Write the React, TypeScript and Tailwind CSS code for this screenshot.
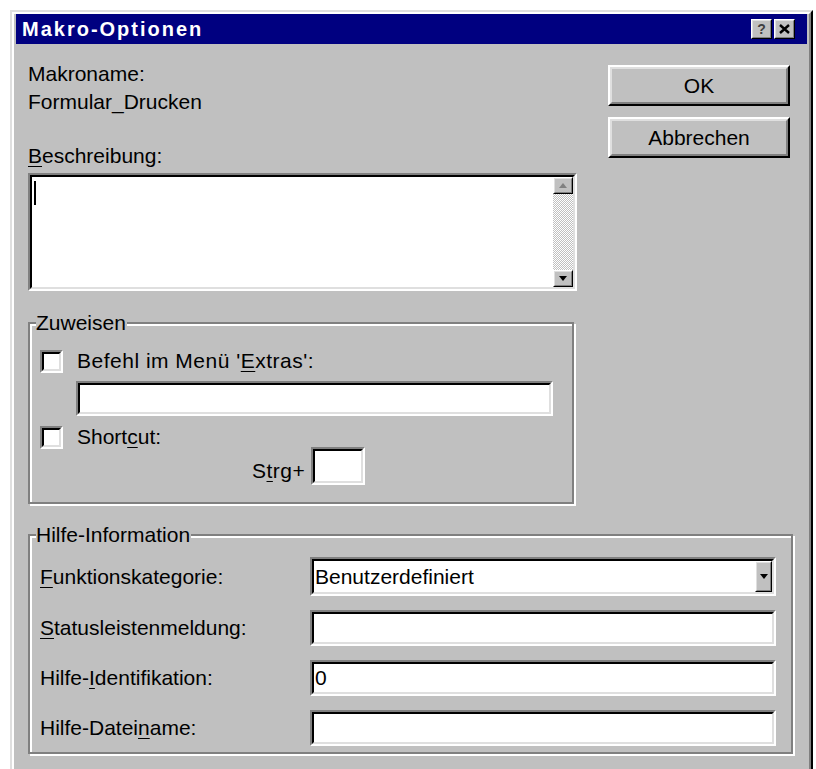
import type { ReactNode } from "react";

// Classic 3D bevels: sunken fields and raised buttons
function Sunken({ className = "", children }: { className?: string; children?: ReactNode }) {
  return (
    <div className={`border-2 border-t-[#808080] border-l-[#808080] border-b-white border-r-white ${className}`}>
      <div className="flex h-full w-full border-2 border-t-black border-l-black border-b-[#dfdfdf] border-r-[#dfdfdf] bg-white">
        {children}
      </div>
    </div>
  );
}

function Raised({ className = "", thin = false, children }: { className?: string; thin?: boolean; children?: ReactNode }) {
  const w = thin ? "border" : "border-2";
  return (
    <div className={`${w} border-t-white border-l-white border-b-black border-r-black ${className}`}>
      <div className={`flex h-full w-full items-center justify-center ${w} border-t-[#dfdfdf] border-l-[#dfdfdf] border-b-[#808080] border-r-[#808080] bg-[#c0c0c0]`}>
        {children}
      </div>
    </div>
  );
}

function Group({ title, className = "", children }: { title: string; className?: string; children: ReactNode }) {
  return (
    <div className={`relative border-2 border-[#808080] shadow-[inset_2px_2px_0_#fff,2px_2px_0_#fff] ${className}`}>
      <span className="absolute -top-[15px] left-[6px] bg-[#c0c0c0] pr-[1px] leading-[28px]">{title}</span>
      {children}
    </div>
  );
}

function Key({ children }: { children: ReactNode }) {
  return <span className="underline decoration-1 underline-offset-[3px]">{children}</span>;
}

function Arrow({ down = false }: { down?: boolean }) {
  return (
    <svg width="8" height="5" viewBox="0 0 8 5">
      <path d={down ? "M0 0h8L4 5z" : "M0 5h8L4 0z"} fill={down ? "#000" : "#808080"} />
    </svg>
  );
}

function Checkbox() {
  return <Sunken className="h-[23px] w-[23px] shrink-0" />;
}

export default function App() {
  return (
    <div className="h-[769px] overflow-hidden bg-white pl-[10px] pt-[10px] font-['Liberation_Sans',Arial,sans-serif] text-[21px] text-black">
      <div className="h-[780px] w-[803px] border-2 border-t-[#dfdfdf] border-l-[#dfdfdf] border-b-black border-r-black">
        <div className="h-full border-2 border-t-white border-l-white border-b-[#808080] border-r-[#808080] bg-[#c0c0c0] px-[2px]">
          {/* caption */}
          <div className="flex h-[30px] items-center bg-[#000080] pl-[6px] pr-[12px]">
            <span className="text-[20px] font-bold tracking-[2px] text-white">Makro-Optionen</span>
            <div className="ml-auto flex gap-[2px]">
              <Raised thin className="h-[20px] w-[21px]">
                <span className="text-[14px] font-bold leading-none text-[#404040]">?</span>
              </Raised>
              <Raised thin className="h-[20px] w-[21px]">
                <svg width="11" height="10" viewBox="0 0 11 10">
                  <path d="M1 1l9 8M10 1l-9 8" stroke="#000" strokeWidth="2.4" />
                </svg>
              </Raised>
            </div>
          </div>

          <div className="px-[12px] pt-[16px]">
            <div className="flex items-start">
              <div className="w-[549px]">
                <div className="leading-[28px]">Makroname:</div>
                <div className="leading-[28px]">Formular_Drucken</div>
                <div className="mt-[26px] leading-[28px]">
                  <Key>B</Key>eschreibung:
                </div>
                <Sunken className="mt-[3px] h-[118px] w-[549px]">
                  <div className="flex-1 pl-[2px] pt-[4px]">
                    <div className="h-[24px] w-[2px] bg-black" />
                  </div>
                  <div className="flex w-[20px] flex-col bg-[repeating-conic-gradient(#c0c0c0_0%_25%,#ffffff_0%_50%)] bg-[length:2px_2px]">
                    <Raised thin className="h-[17px] w-[20px]">
                      <Arrow />
                    </Raised>
                    <div className="flex-1" />
                    <Raised thin className="h-[17px] w-[20px]">
                      <Arrow down />
                    </Raised>
                  </div>
                </Sunken>

                <Group title="Zuweisen" className="mt-[31px] w-[546px] pb-[17px] pl-[10px] pt-[24px]">
                  <div className="flex h-[26px] items-center gap-[14px]">
                    <Checkbox />
                    <span className="leading-[28px] tracking-[0.5px]">
                      Befehl im Menü '<Key>E</Key>xtras':
                    </span>
                  </div>
                  <Sunken className="ml-[36px] mt-[7px] h-[35px] w-[477px]" />
                  <div className="mt-[8px] flex h-[26px] items-center gap-[14px]">
                    <Checkbox />
                    <span className="leading-[28px]">
                      Short<Key>c</Key>ut:
                    </span>
                  </div>
                  <div className="-mt-[3px] flex items-end gap-[6px] pl-[212px]">
                    <span className="leading-[28px] tracking-[0.5px]">
                      S<Key>t</Key>rg+
                    </span>
                    <Sunken className="h-[38px] w-[54px]" />
                  </div>
                </Group>
              </div>

              <div className="ml-[31px] mt-[5px] flex w-[182px] flex-col gap-[11px]">
                <Raised className="h-[41px] w-[182px]">OK</Raised>
                <Raised className="h-[41px] w-[182px]">Abbrechen</Raised>
              </div>
            </div>

            <Group title="Hilfe-Information" className="mt-[30px] w-[765px] pb-[6px] pl-[10px] pr-[15px] pt-[21px]">
              <div className="grid grid-cols-[270px_1fr] items-center gap-y-[14px]">
                <span className="leading-[28px]">
                  <Key>F</Key>unktionskategorie:
                </span>
                <Sunken className="h-[39px]">
                  <span className="flex-1 self-center pl-[1px] leading-[28px]">Benutzerdefiniert</span>
                  <Raised thin className="h-full w-[17px]">
                    <Arrow down />
                  </Raised>
                </Sunken>

                <span className="leading-[28px]">
                  <Key>S</Key>tatusleistenmeldung:
                </span>
                <Sunken className="h-[36px]" />

                <span className="leading-[28px]">
                  Hilfe-<Key>I</Key>dentifikation:
                </span>
                <Sunken className="h-[36px]">
                  <span className="self-center pl-[1px] leading-[28px]">0</span>
                </Sunken>

                <span className="leading-[28px]">
                  Hilfe-Datei<Key>n</Key>ame:
                </span>
                <Sunken className="h-[36px]" />
              </div>
            </Group>
          </div>
        </div>
      </div>
    </div>
  );
}
